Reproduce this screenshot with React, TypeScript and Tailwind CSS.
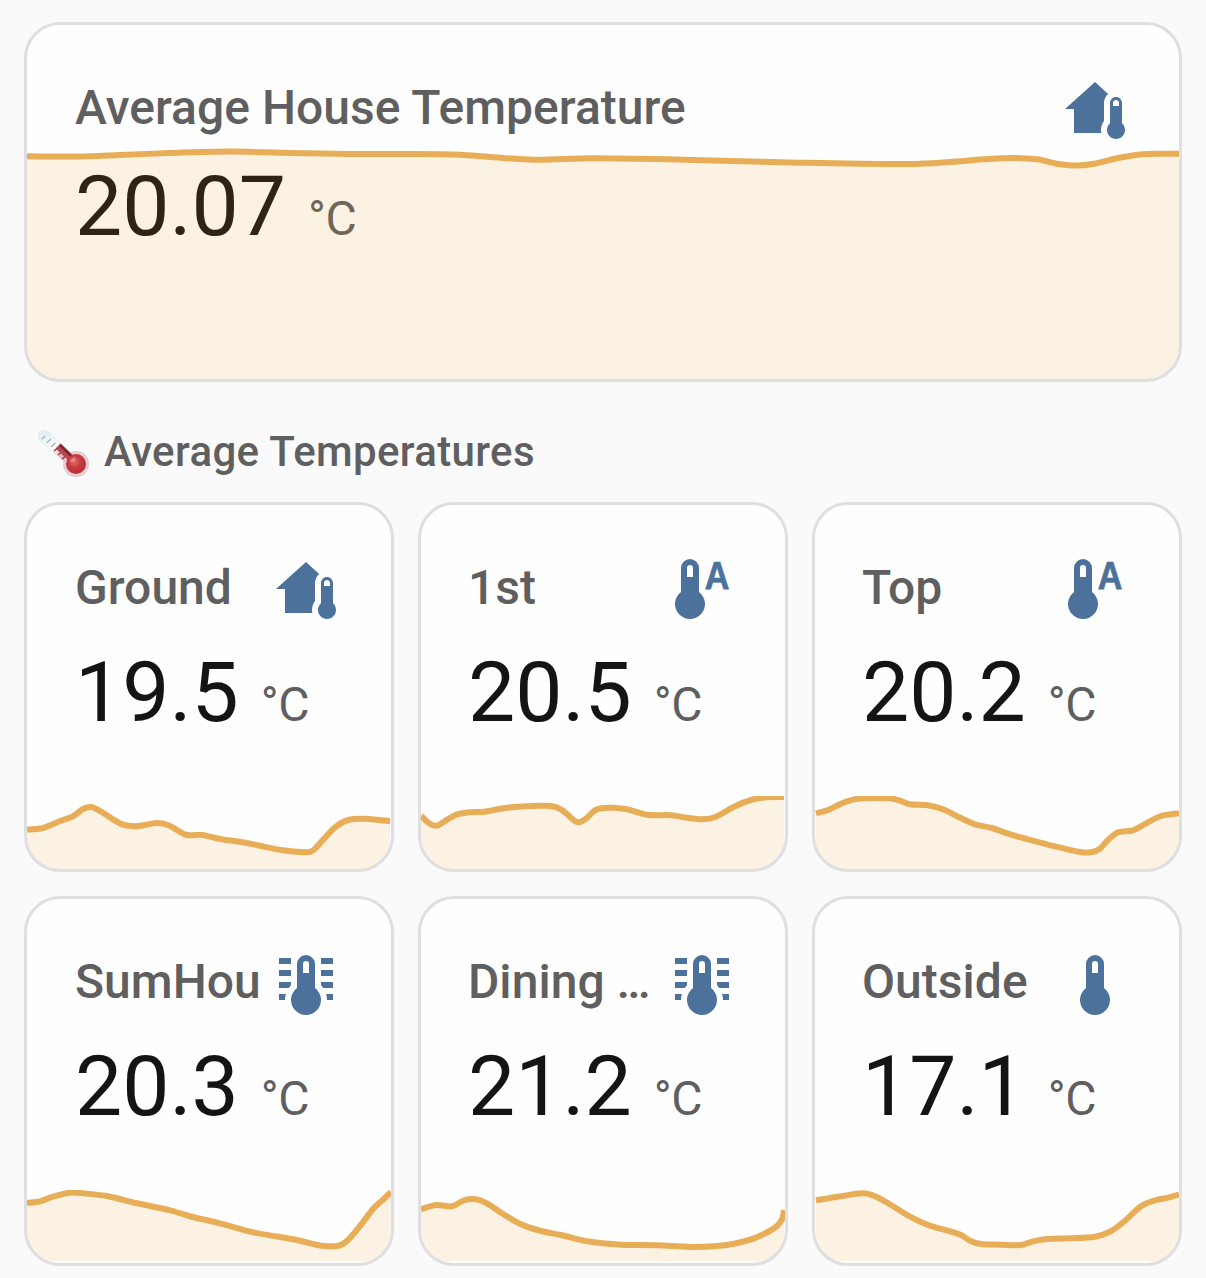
import type { ReactNode } from "react";

type Point = [number, number];

const THERMOMETER =
  "M15 13V5A3 3 0 0 0 9 5V13A5 5 0 1 0 15 13M12 4A1 1 0 0 1 13 5V8H11V5A1 1 0 0 1 12 4Z";
const HOUSE_THERMOMETER =
  "M19 8C20.11 8 21 8.9 21 10V16.76C21.61 17.31 22 18.11 22 19C22 20.66 20.66 22 19 22C17.34 22 16 20.66 16 19C16 18.11 16.39 17.31 17 16.76V10C17 8.9 17.9 8 19 8M19 9C18.45 9 18 9.45 18 10V11H20V10C20 9.45 19.55 9 19 9M5 20V12H2L12 3L16.4 6.96C15.54 7.69 15 8.78 15 10V16C14.37 16.83 14 17.87 14 19L14.1 20H5Z";
const LINES =
  "M17 3H21V5H17V3M17 7H21V9H17V7M17 11H21V13H17.75L17 12.1V11M21 15V17H19C19 16.31 18.9 15.63 18.71 15H21M7 3V5H3V3H7M7 7V9H3V7H7M7 11V12.1L6.25 13H3V11H7M3 15H5.29C5.1 15.63 5 16.31 5 17H3V15Z";

type IconName = "house" | "auto" | "lines" | "plain";

function Icon({ name }: { name: IconName }) {
  return (
    <svg viewBox="0 0 24 24" className="size-[72px] shrink-0 fill-[#4c729b]">
      {name === "house" && <path d={HOUSE_THERMOMETER} />}
      {name === "plain" && <path d={THERMOMETER} />}
      {name === "lines" && (
        <>
          <path d={LINES} />
          <path d={THERMOMETER} />
        </>
      )}
      {name === "auto" && (
        <>
          <path d={THERMOMETER} transform="translate(-4 0)" />
          <text
            x="12.9"
            y="11.9"
            fontFamily="Liberation Sans, sans-serif"
            fontSize="12.8"
            fontWeight="700"
            stroke="#4c729b"
            strokeWidth="0.25"
            textLength="8.2"
            lengthAdjust="spacingAndGlyphs"
          >
            A
          </text>
        </>
      )}
    </svg>
  );
}

function slope(points: Point[], i: number) {
  const a = points[Math.max(i - 1, 0)];
  const b = points[Math.min(i + 1, points.length - 1)];
  return (b[1] - a[1]) / (b[0] - a[0]);
}

/** Smooth curve through every sample. */
function curve(points: Point[]) {
  let d = `M${points[0][0]} ${points[0][1]}`;
  for (let i = 0; i < points.length - 1; i++) {
    const [x0, y0] = points[i];
    const [x1, y1] = points[i + 1];
    const h = (x1 - x0) / 3;
    d += `C${x0 + h} ${y0 + h * slope(points, i)} ${x1 - h} ${y1 - h * slope(points, i + 1)} ${x1} ${y1}`;
  }
  return d;
}

function Graph({
  points,
  viewBox,
  floor,
  className,
}: {
  points: Point[];
  viewBox: string;
  floor: number;
  className: string;
}) {
  const d = curve(points);
  const first = points[0][0];
  const last = points[points.length - 1][0];
  return (
    <svg viewBox={viewBox} className={className}>
      <path d={`${d}L${last} ${floor}L${first} ${floor}Z`} fill="#ed9e28" fillOpacity="0.12" />
      <path d={d} fill="none" stroke="#e8ae57" strokeWidth="6" />
    </svg>
  );
}

function Card({ className, children }: { className: string; children: ReactNode }) {
  return (
    <section
      className={`relative overflow-hidden rounded-[36px] border-[3px] border-[#dfdfe1] bg-[#fefefe] pt-12 ${className}`}
    >
      {children}
    </section>
  );
}

function Header({ title, icon, iconClass = "" }: { title: string; icon: IconName; iconClass?: string }) {
  return (
    <div className="flex h-[72px] items-start justify-between">
      <h2 className="text-[48px] leading-[70px] font-medium tracking-[0.03px] whitespace-nowrap text-[#5f5f5f]">
        {title}
      </h2>
      <div className={iconClass}>
        <Icon name={icon} />
      </div>
    </div>
  );
}

function Reading({ value, className }: { value: string; className: string }) {
  return (
    <div className={`flex items-baseline gap-[22px] whitespace-nowrap ${className}`}>
      <span className="text-[84px] leading-[84px] text-[#141414]">{value}</span>
      <span className="text-[48px] leading-[48px] tracking-[-0.4px] text-[#5f5f5f]">°C</span>
    </div>
  );
}

function ThermometerEmoji() {
  return (
    <svg viewBox="0 0 54 54" className="mt-1 size-[54px] shrink-0">
      <defs>
        <radialGradient id="bulb" cx="0.42" cy="0.38" r="0.65">
          <stop offset="0" stopColor="#e0706c" />
          <stop offset="0.5" stopColor="#c63a3c" />
          <stop offset="1" stopColor="#b03238" />
        </radialGradient>
        <linearGradient id="glass" x1="0" y1="0" x2="1" y2="1">
          <stop offset="0" stopColor="#e6eff3" />
          <stop offset="0.4" stopColor="#fbfdfd" />
          <stop offset="0.65" stopColor="#e8b5b7" />
          <stop offset="1" stopColor="#d9bcc4" />
        </linearGradient>
      </defs>
      <path d="M8 10L38 37" stroke="#dde6eb" strokeWidth="12" strokeLinecap="round" />
      <circle cx="40" cy="38" r="13" fill="#dccbd3" />
      <path d="M8 10L38 37" stroke="url(#glass)" strokeWidth="10.5" strokeLinecap="round" />
      <circle cx="40" cy="38" r="11.8" fill="#ecccd0" />
      <path d="M22 20L38 35" stroke="#b64a4e" strokeWidth="7" />
      <path d="M24 19L38 33" stroke="#86242c" strokeWidth="2.5" />
      <circle cx="40" cy="38" r="10" fill="url(#bulb)" />
      <path d="M6 13L9 10M10.5 17L15 13M15 21L19.5 17" stroke="#9fb6c1" strokeWidth="1.3" />
      <path d="M18 25L21 22.5M22 29L25 26.5M26 33L29 30.5" stroke="#9c3a43" strokeWidth="1.5" />
      <ellipse cx="37" cy="34" rx="3" ry="1.8" fill="#f0a09c" opacity="0.6" transform="rotate(-35 37 34)" />
    </svg>
  );
}

const HOUSE_POINTS: Point[] = [
  [0, 131.3], [48, 131.5], [93, 130], [143, 128], [203, 126.5], [263, 128], [323, 129], [373, 129],
  [433, 129.7], [463, 132], [508, 134.7], [563, 133.3], [640, 134.3], [773, 137.7], [883, 139],
  [923, 137], [956, 134.3], [986, 133], [1010, 134.3], [1030, 138.7], [1048, 140.5], [1066, 139],
  [1090, 133.3], [1113, 129.5], [1133, 128.7], [1152, 128.7],
];

type Room = {
  title: string;
  icon: IconName;
  iconClass?: string;
  value: string;
  padding: string;
  floor: number;
  points: Point[];
};

const ROOMS: Room[] = [
  {
    title: "Ground", icon: "house", value: "19.5", padding: "pl-12 pr-[49px]", floor: 100,
    points: [[0, 60.7], [16, 59], [33, 52], [46, 47.3], [56, 40], [64, 38], [73, 42], [86, 50.3], [96, 55.7], [108, 57.3], [118, 56], [130, 54], [141, 56], [151, 61.7], [160, 66], [175, 66], [193, 70], [213, 72.7], [233, 76.7], [256, 81.3], [280, 83.3], [286, 81.3], [295, 72], [308, 58.3], [321, 51], [338, 49.7], [363, 52.3]],
  },
  {
    title: "1st", icon: "auto", value: "20.5", padding: "pl-[47px] pr-[47px]", floor: 100,
    points: [[0, 46.7], [8, 54.3], [15.7, 56.7], [23, 52.7], [35, 45.7], [48, 43.3], [63, 42.7], [86, 38.7], [113, 37], [130, 37], [140, 40.3], [148, 47], [157, 53.3], [165, 49.7], [175, 40.7], [190, 38.7], [206, 40.3], [226, 45.7], [250, 46.3], [266, 48.7], [281, 50.3], [295, 47.7], [313, 37.7], [330, 31], [346, 28.3], [363, 28]],
  },
  {
    title: "Top", icon: "auto", value: "20.2", padding: "pl-[47px] pr-12", floor: 100,
    points: [[1, 44.3], [13, 41], [26, 34.7], [41, 30], [60, 29], [75, 29.3], [85, 31.7], [95, 35.3], [113, 36.3], [128, 40.3], [143, 47.7], [160, 55.3], [177, 59], [193, 64.7], [213, 70.3], [240, 77.3], [265, 83], [276, 83.3], [285, 79.7], [293, 71], [303, 63.3], [318, 61.3], [331, 54.3], [346, 47], [364, 44.3]],
  },
  {
    title: "SumHou", icon: "lines", iconClass: "mt-[2px]", value: "20.3", padding: "pl-12 pr-[49px]", floor: 98,
    points: [[0, 40], [13, 38.3], [26, 33.7], [43, 29.7], [60, 30.7], [81, 33.3], [110, 40.3], [143, 47.3], [166, 54], [193, 60.3], [226, 69.3], [270, 77], [290, 82], [303, 83.3], [313, 82.3], [321, 77], [333, 63], [346, 46], [357, 35.7], [364, 29]],
  },
  {
    title: "Dining …", icon: "lines", iconClass: "mt-[2px]", value: "21.2", padding: "pl-[47px] pr-[47px]", floor: 98,
    points: [[0, 46.3], [15, 42], [31, 43.3], [43, 37.3], [55, 36.3], [66, 40.3], [81, 50.3], [100, 61.3], [120, 68], [140, 72], [166, 78.3], [200, 81.7], [236, 82.3], [270, 84], [293, 83.3], [313, 80.7], [333, 75.3], [346, 69.3], [356, 63], [361.5, 55.3], [363, 47]],
  },
  {
    title: "Outside", icon: "plain", iconClass: "mt-[2px]", value: "17.1", padding: "pl-[47px] pr-12", floor: 98,
    points: [[1, 37.3], [26, 33.3], [48, 30.3], [61, 33.7], [76, 42], [95, 53.7], [113, 62], [133, 67.7], [146, 72], [156, 78.3], [166, 81], [186, 81.7], [206, 82], [216, 79], [230, 76.3], [253, 75.3], [280, 73.7], [295, 68.7], [310, 57.7], [326, 43.3], [340, 37.3], [353, 34.7], [364, 31.3]],
  },
];

export default function App() {
  return (
    <main className="h-[1278px] overflow-hidden bg-[#fafafa] px-6 pt-[22px] font-['Roboto',sans-serif]">
      <Card className="h-[360px] pr-12 pl-12">
        <Header title="Average House Temperature" icon="house" />
        <Reading value="20.07" className="mt-5" />
        <Graph
          points={HOUSE_POINTS}
          viewBox="0 0 1152 354"
          floor={354}
          className="absolute inset-0 size-full"
        />
      </Card>
      <div className="flex h-[120px] gap-[14px] pt-10 pl-3">
        <ThermometerEmoji />
        <h1 className="text-[42px] leading-[60px] font-medium tracking-[0.35px] text-[#5f5f5f]">
          Average Temperatures
        </h1>
      </div>
      <div className="grid grid-cols-3 gap-6">
        {ROOMS.map((room) => (
          <Card key={room.title} className={`h-[370px] ${room.padding}`}>
            <Header title={room.title} icon={room.icon} iconClass={room.iconClass} />
            <Reading value={room.value} className="mt-[26px]" />
            <Graph
              points={room.points}
              viewBox="0 27 364 73"
              floor={room.floor}
              className="absolute bottom-0 left-0 h-[73px] w-[364px]"
            />
          </Card>
        ))}
      </div>
    </main>
  );
}
